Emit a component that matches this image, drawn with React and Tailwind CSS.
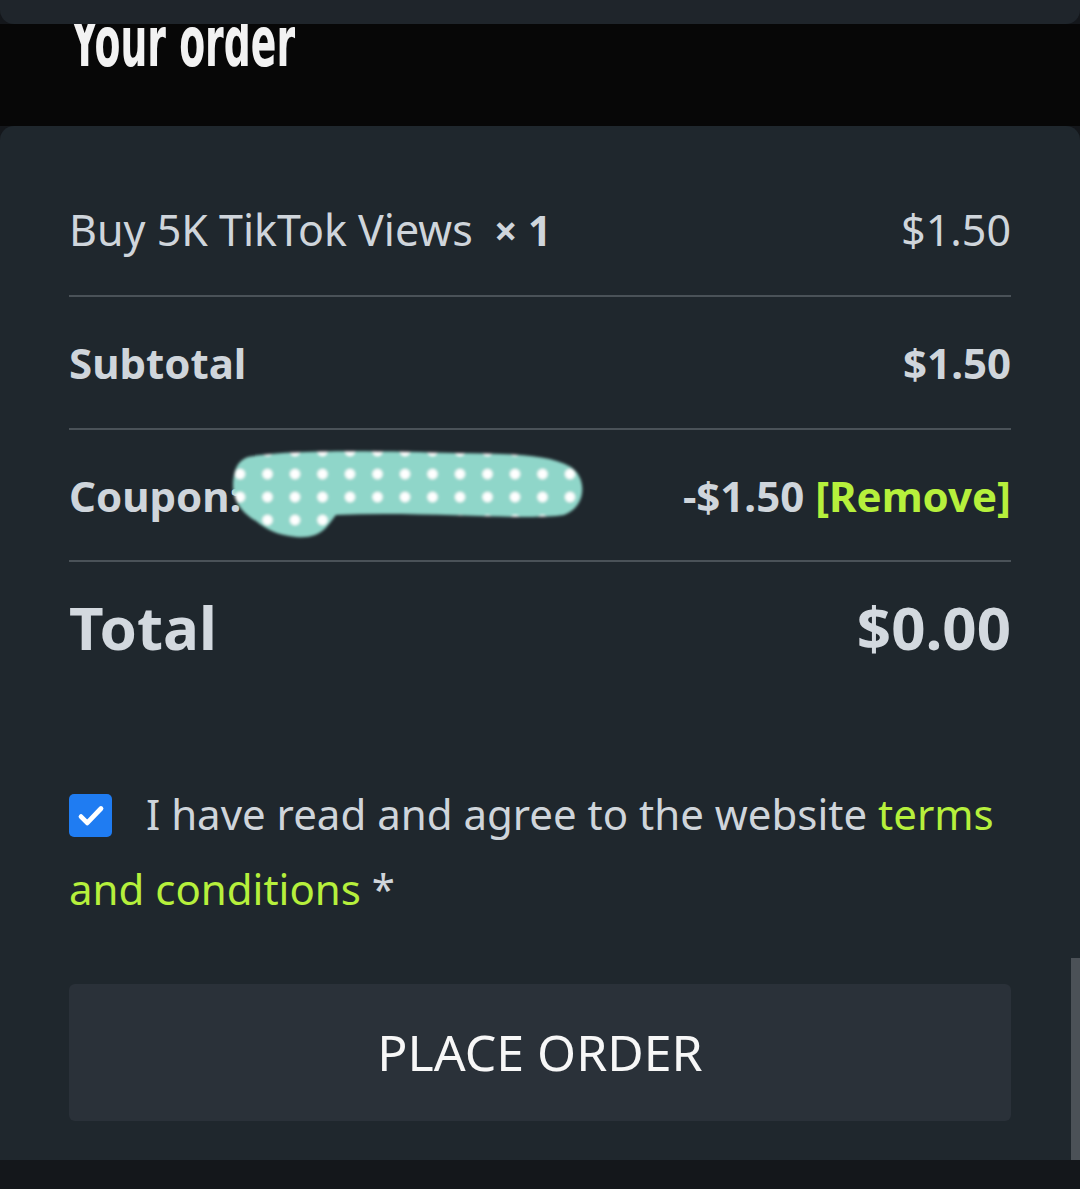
import React from 'react';

const sans = { fontFamily: '"Noto Sans", "Open Sans", sans-serif' };

const CouponScribble = () => (
  <svg width="360" height="96" viewBox="0 0 360 96" className="absolute left-[226px] top-[319px]">
    <defs>
      <pattern id="dots" x="0" y="0" width="27.5" height="23" patternUnits="userSpaceOnUse">
        <rect width="27.5" height="23" fill="#8fd6c9" />
        <circle cx="14" cy="6" r="5.2" fill="#ffffff" />
      </pattern>
      <filter id="soft" x="-5%" y="-10%" width="110%" height="120%">
        <feGaussianBlur stdDeviation="1.4" />
      </filter>
    </defs>
    <path
      d="M22 12 C60 4 160 6 230 8 C280 9 320 8 345 22 C362 34 360 62 338 70 C300 76 200 66 110 70 C100 82 96 94 70 92 C50 90 40 84 30 76 C12 66 4 50 8 30 C10 20 14 15 22 12 Z"
      fill="url(#dots)"
      filter="url(#soft)"
    />
  </svg>
);

const CheckBox = () => (
  <span className="inline-flex w-[43px] h-[43px] rounded-[5px] bg-[#1f7cf2] items-center justify-center align-middle -mt-[6px] mr-[34px]">
    <svg width="30" height="30" viewBox="0 0 24 24" fill="none">
      <path d="M4 12.5l5 5L20 6" stroke="#ffffff" strokeWidth="3.8" strokeLinecap="round" strokeLinejoin="round" />
    </svg>
  </span>
);

export default function App() {
  return (
    <div className="w-[1080px] h-[1189px] bg-[#14171b] overflow-hidden relative" style={sans}>
      {/* Sticky top bar edge */}
      <div className="h-[24px] bg-[#1f252b] rounded-b-[14px]" />

      {/* Section title */}
      <div className="h-[102px] bg-[#070707] overflow-hidden">
        <div className="pl-[71px] -mt-[17px]">
          <span
            className="inline-block origin-left scale-x-[0.6] text-[70px] leading-none font-bold text-[#f2f2f2]"
            style={{ fontFamily: '"DejaVu Sans Condensed", "DejaVu Sans", sans-serif' }}
          >
            Your order
          </span>
        </div>
      </div>

      {/* Order card */}
      <div className="relative bg-[#1f272d] rounded-t-[14px] px-[69px] pt-[39px] h-[1034px]">
        <div className="h-[130px] flex items-center justify-between text-[#cfd5db] text-[43px]">
          <span>
            Buy 5K TikTok Views <span className="font-bold text-[41px] ml-[10px]">× 1</span>
          </span>
          <span>$1.50</span>
        </div>
        <div className="h-[2px] bg-[#4a5258]" />

        <div className="h-[131px] flex items-center justify-between text-[#cfd5db] text-[42px] font-bold">
          <span>Subtotal</span>
          <span>$1.50</span>
        </div>
        <div className="h-[2px] bg-[#4a5258]" />

        <div className="h-[130px] flex items-center justify-between text-[#cfd5db] text-[42px] font-bold">
          <span>Coupon:</span>
          <span>
            -$1.50 <span className="text-[#b6f03c]">[Remove]</span>
          </span>
        </div>
        <div className="h-[2px] bg-[#4a5258]" />

        <div className="h-[130px] flex items-center justify-between text-[#d3d9df] text-[60px] font-bold">
          <span>Total</span>
          <span>$0.00</span>
        </div>

        <p className="mt-[84px] text-[42px] leading-[75px] text-[#cfd5db]">
          <CheckBox />
          I have read and agree to the website{' '}
          <span className="text-[#b6f03c]">terms and conditions</span> *
        </p>

        <button className="mt-[58px] w-full h-[137px] rounded-[6px] bg-[#2a3139] text-[#f7f7f7] text-[50px]">
          PLACE ORDER
        </button>

        <CouponScribble />
        <div className="absolute right-0 top-[832px] w-[9px] h-[202px] bg-[#4b5157]" />
      </div>
    </div>
  );
}
